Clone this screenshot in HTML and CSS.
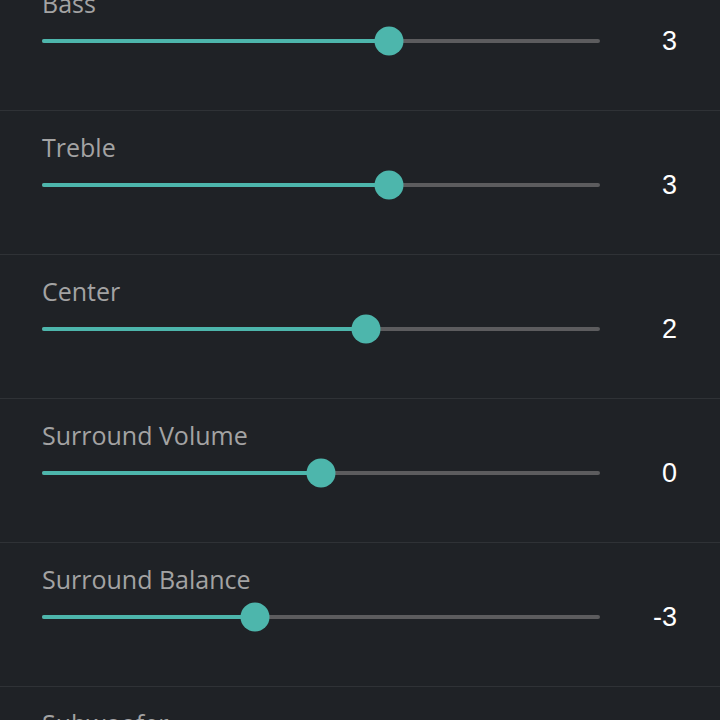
FILE: index.html
```html
<!DOCTYPE html>
<html lang="en">
<head>
  <meta charset="UTF-8" />
  <meta name="viewport" content="width=device-width, initial-scale=1.0"/>
  <title>Sound Settings</title>
  <link rel="stylesheet" href="styles.css">
</head>
<body>
  <div class="list">
    <div class="row">
      <div class="label">Bass</div>
      <div class="slider-line">
        <div class="track"><div class="fill" style="width: 62.2%"></div><div class="thumb" style="left: 62.2%"></div></div>
        <div class="value">3</div>
      </div>
    </div>

    <div class="row">
      <div class="label">Treble</div>
      <div class="slider-line">
        <div class="track"><div class="fill" style="width: 62.2%"></div><div class="thumb" style="left: 62.2%"></div></div>
        <div class="value">3</div>
      </div>
    </div>

    <div class="row">
      <div class="label">Center</div>
      <div class="slider-line">
        <div class="track"><div class="fill" style="width: 58.1%"></div><div class="thumb" style="left: 58.1%"></div></div>
        <div class="value">2</div>
      </div>
    </div>

    <div class="row">
      <div class="label">Surround Volume</div>
      <div class="slider-line">
        <div class="track"><div class="fill" style="width: 50%"></div><div class="thumb" style="left: 50%"></div></div>
        <div class="value">0</div>
      </div>
    </div>

    <div class="row">
      <div class="label">Surround Balance</div>
      <div class="slider-line">
        <div class="track"><div class="fill" style="width: 38.2%"></div><div class="thumb" style="left: 38.2%"></div></div>
        <div class="value">-3</div>
      </div>
    </div>

    <div class="row">
      <div class="label">Subwoofer</div>
      <div class="slider-line">
        <div class="track"><div class="fill" style="width: 50%"></div><div class="thumb" style="left: 50%"></div></div>
        <div class="value">0</div>
      </div>
    </div>
  </div>
</body>
</html>
```

FILE: styles.css
```css
html, body {
  margin: 0;
  padding: 0;
  background-color: #1f2226;
  overflow: hidden;
}
.list {
  margin-top: -33px;
}
.row {
  height: 144px;
  box-sizing: border-box;
  padding: 20px 43px 0 42px;
  border-bottom: 1px solid #2f3236;
}
.label {
  font-family: "Open Sans", sans-serif;
  font-size: 25px;
  line-height: 32px;
  color: #a3a3a3;
}
.slider-line {
  display: flex;
  align-items: center;
  height: 30px;
  margin-top: 7px;
}
.track {
  position: relative;
  width: 558px;
  height: 4px;
  border-radius: 2px;
  background: #5c5c5e;
}
.fill {
  height: 4px;
  border-radius: 2px;
  background: #4db6ac;
}
.thumb {
  position: absolute;
  top: 50%;
  width: 29px;
  height: 29px;
  border-radius: 50%;
  background: #4db6ac;
  transform: translate(-50%, -50%);
}
.value {
  flex: 1;
  text-align: right;
  font-family: "Liberation Sans", Arial, sans-serif;
  font-size: 27px;
  color: #ffffff;
}
```
